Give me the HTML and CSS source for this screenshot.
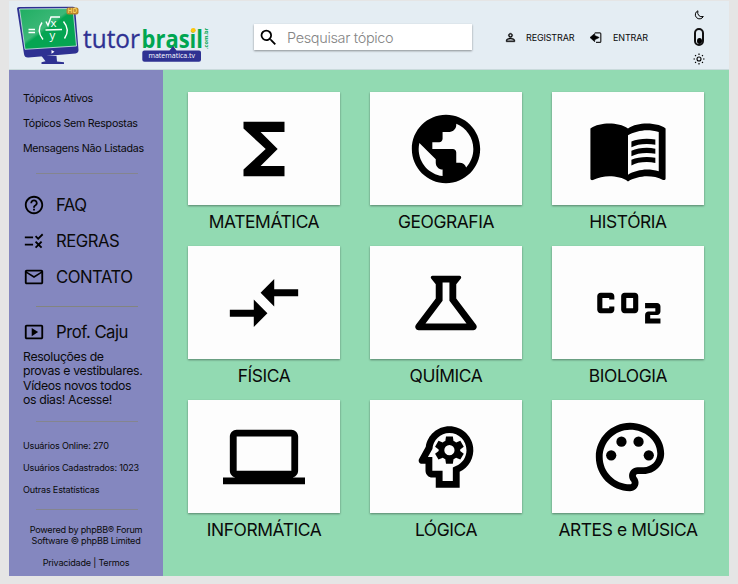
FILE: index.html
```html
<!DOCTYPE html>
<html lang="pt-BR">
<head>
<meta charset="utf-8">
<title>TutorBrasil</title>
<link rel="stylesheet" href="styles.css">
</head>
<body>
<div class="page">
  <header class="header">
    <svg class="logo" viewBox="0 0 200 64" role="img" aria-label="tutorbrasil">
      <defs>
        <linearGradient id="screen" x1="0" y1="0" x2="1" y2="1">
          <stop offset="0" stop-color="#1fae62"/><stop offset=".45" stop-color="#3db878"/><stop offset=".5" stop-color="#05a552"/><stop offset="1" stop-color="#05a552"/>
        </linearGradient>
      </defs>
      <path d="M2 3.500Q2 2 4 2l54-.2q2 0 2.200 2l3.300 41.200q.2 3-3 3.400l-47 4q-4 .3-4.500-3.500z" fill="#2e3192"/>
      <path d="M4.500 4 58 3.500 61.500 41 10 44.300z" fill="url(#screen)" stroke="#d3e9e7" stroke-width=".8"/>
      <path d="M28 51h15l.5 5.500 7 .8v1.700H28v-1.700l4-1z" fill="#2e3192" transform="translate(-1.500 0)"/>
      <path d="m36.500 45 3 1.800-3 1.900z" fill="#fff"/>
      <g class="formula">
        <path d="M13.500 24.500h6.500M13.500 27.500h6.500M27 17.500q-6 8.500 1 17M48.500 16.500q7 8.500 1 17M30.500 25 47 24.500M31 16.500l2 4 3-8.500h9"/>
      </g>
      <text x="35.500" y="21.500" class="variable">x</text>
      <text x="34.500" y="33.500" class="variable">y</text>
      <rect x="51.500" y="2.500" width="12" height="7" rx="2" fill="#b98528"/>
      <text x="52.500" y="8.300" class="hd">HD</text>
      <text x="68" y="42.700" class="tutor" textLength="57" lengthAdjust="spacingAndGlyphs">tutor</text>
      <text x="126.500" y="42.700" class="brasil" textLength="61.500" lengthAdjust="spacingAndGlyphs">brasil</text>
      <circle cx="178.300" cy="25.300" r="2.400" fill="#fdc60b"/>
      <path d="M129.500 45.500h25l3.500-4.500 3.500 4.500h22.500q2 0 2 2v7.300q0 2-2 2h-54.500q-2.200 0-2.200-2v-7.300q0-2 2.200-2z" fill="#2e3192"/>
      <text x="133.500" y="53.300" class="domain" textLength="46.500" lengthAdjust="spacingAndGlyphs">matematica.tv</text>
      <text transform="translate(192.700 44) rotate(-90)" class="suffix" textLength="21" lengthAdjust="spacingAndGlyphs">.com.br</text>
    </svg>

    <label class="search">
      <svg class="search-icon" viewBox="0 0 24 24"><path d="M15.500 14h-.79l-.28-.27A6.470 6.470 0 0 0 16 9.500 6.500 6.500 0 1 0 9.500 16c1.610 0 3.090-.59 4.230-1.570l.27.28v.79l5 4.990L20.490 19l-4.990-5zm-6 0C7.010 14 5 11.990 5 9.500S7.010 5 9.500 5 14 7.010 14 9.500 11.990 14 9.500 14z"/></svg>
      <input class="search-input" type="text" placeholder="Pesquisar tópico">
    </label>

    <nav class="account">
      <a class="account-link register">
        <svg class="account-icon person" viewBox="0 0 24 24"><path d="M12 5.900c1.160 0 2.100.94 2.100 2.100s-.94 2.100-2.100 2.100S9.900 9.160 9.900 8s.94-2.100 2.100-2.100m0 9c2.970 0 6.100 1.460 6.100 2.100v1.100H5.900V17c0-.64 3.130-2.100 6.100-2.100M12 4C9.790 4 8 5.790 8 8s1.790 4 4 4 4-1.790 4-4-1.790-4-4-4zm0 9c-2.670 0-8 1.340-8 4v3h16v-3c0-2.660-5.330-4-8-4z"/></svg>
        <span>REGISTRAR</span>
      </a>
      <a class="account-link login">
        <svg class="account-icon" viewBox="0 0 13 13"><path d="M0 6.500 4.700 2.500v2L9.200 6.500 4.700 8.700v2z" stroke="#000" stroke-width=".6"/><path d="M4.800 1.800h5q1 0 1 1v7.600q0 1-1 1H6" fill="none" stroke="#222" stroke-width="1.200"/></svg>
        <span>ENTRAR</span>
      </a>
    </nav>

    <div class="theme">
      <svg class="theme-icon" viewBox="0 0 12 12"><path d="M4.900 1.800A4.200 4.200 0 1 0 10.300 7.500Q7.500 8.300 5.800 6.500T4.900 1.800z" fill="none" stroke="#000" stroke-linejoin="round"/></svg>
      <span class="toggle"><span class="knob"></span></span>
      <svg class="theme-icon" viewBox="0 0 12 12"><circle cx="6" cy="6" r="2" fill="none" stroke="#000" stroke-width="1.100"/><path d="M6 .5v1.500M6 10v1.500M.5 6h1.500M10 6h1.500M2.100 2.100l.9.900M9 9l.9.900M9.900 2.100 9 3M3 9l-.9.900" stroke="#000" stroke-width="1.200"/></svg>
    </div>
  </header>

  <div class="body">
    <aside class="sidebar">
      <ul class="links">
        <li>Tópicos Ativos</li>
        <li>Tópicos Sem Respostas</li>
        <li>Mensagens Não Listadas</li>
      </ul>
      <hr class="divider">
      <ul class="menu">
        <li><svg viewBox="0 0 24 24"><path d="M11 18h2v-2h-2v2zm1-16C6.480 2 2 6.480 2 12s4.480 10 10 10 10-4.480 10-10S17.520 2 12 2zm0 18c-4.410 0-8-3.590-8-8s3.590-8 8-8 8 3.590 8 8-3.590 8-8 8zm0-14c-2.210 0-4 1.790-4 4h2c0-1.100.9-2 2-2s2 .9 2 2c0 2-3 1.750-3 5h2c0-2.250 3-2.500 3-5 0-2.210-1.790-4-4-4z"/></svg><span>FAQ</span></li>
        <li><svg viewBox="0 0 24 24"><path d="M16.540 11 13 7.460l1.410-1.410 2.120 2.120 4.240-4.240 1.410 1.410L16.540 11zM11 7H2v2h9V7zm10 6.410L19.590 12 17 14.590 14.410 12 13 13.410 15.590 16 13 18.590 14.410 20 17 17.410 19.590 20 21 18.590 18.410 16 21 13.410zM11 15H2v2h9v-2z"/></svg><span>REGRAS</span></li>
        <li><svg viewBox="0 0 24 24"><path d="M22 6c0-1.100-.9-2-2-2H4c-1.100 0-2 .9-2 2v12c0 1.100.9 2 2 2h16c1.100 0 2-.9 2-2V6zm-2 0-8 5-8-5h16zm0 12H4V8l8 5 8-5v10z"/></svg><span>CONTATO</span></li>
      </ul>
      <hr class="divider">
      <ul class="menu">
        <li><svg viewBox="0 0 24 24"><path d="M9.500 7.500v9l7-4.500zM20 4H4c-1.100 0-2 .9-2 2v12c0 1.100.9 2 2 2h16c1.100 0 2-.9 2-2V6c0-1.100-.9-2-2-2zm0 14H4V6h16z"/></svg><span>Prof. Caju</span></li>
      </ul>
      <p class="about">Resoluções de<br>provas e vestibulares.<br>Vídeos novos todos<br>os dias! Acesse!</p>
      <hr class="divider">
      <ul class="stats">
        <li>Usuários Online: 270</li>
        <li>Usuários Cadastrados: 1023</li>
        <li>Outras Estatísticas</li>
      </ul>
      <hr class="divider">
      <footer class="footer">
        <p>Powered by phpBB® Forum<br>Software © phpBB Limited</p>
        <p>Privacidade | Termos</p>
      </footer>
    </aside>

    <main class="grid">
      <figure class="subject">
        <div class="card"><svg viewBox="0 0 24 24"><path d="M18 4H6v2l6.500 6L6 18v2h12v-3h-7l5-5-5-5h7z"/></svg></div>
        <figcaption>MATEMÁTICA</figcaption>
      </figure>
      <figure class="subject">
        <div class="card"><svg viewBox="0 0 24 24"><path d="M12 2C6.480 2 2 6.480 2 12s4.480 10 10 10 10-4.480 10-10S17.520 2 12 2zm-1 17.930c-3.950-.49-7-3.850-7-7.930 0-.62.08-1.210.21-1.790L9 15v1c0 1.100.9 2 2 2v1.930zm6.900-2.540c-.26-.81-1-1.390-1.900-1.390h-1v-3c0-.55-.45-1-1-1H8v-2h2c.55 0 1-.45 1-1V7h2c1.100 0 2-.9 2-2v-.41c2.930 1.190 5 4.060 5 7.410 0 2.080-.8 3.970-2.100 5.390z"/></svg></div>
        <figcaption>GEOGRAFIA</figcaption>
      </figure>
      <figure class="subject">
        <div class="card"><svg viewBox="0 0 24 24"><path d="M21 5c-1.110-.35-2.330-.5-3.500-.5-1.950 0-4.050.4-5.500 1.500-1.450-1.100-3.550-1.500-5.500-1.500S2.450 4.900 1 6v14.650c0 .25.25.5.5.5.1 0 .15-.05.25-.05C3.100 20.450 5.050 20 6.500 20c1.950 0 4.050.4 5.500 1.500 1.350-.85 3.800-1.500 5.500-1.500 1.650 0 3.350.3 4.750 1.050.1.050.15.05.25.05.25 0 .5-.25.5-.5V6c-.6-.45-1.250-.75-2-1zm0 13.500c-1.100-.35-2.300-.5-3.500-.5-1.700 0-4.150.65-5.500 1.500V8c1.350-.85 3.800-1.500 5.500-1.500 1.200 0 2.400.15 3.500.5v11.500z"/><path d="M17.500 10.500c.88 0 1.730.09 2.500.26V9.240C19.210 9.090 18.360 9 17.500 9c-1.700 0-3.240.29-4.500.83v1.660c1.130-.64 2.700-.99 4.500-.99zM13 12.490v1.660c1.130-.64 2.700-.99 4.500-.99.88 0 1.730.09 2.500.26V11.900c-.79-.15-1.640-.24-2.500-.24-1.700 0-3.240.3-4.500.83zM17.500 14.330c-1.700 0-3.240.29-4.500.83v1.660c1.130-.64 2.700-.99 4.500-.99.88 0 1.730.09 2.500.26v-1.520c-.79-.16-1.640-.24-2.500-.24z"/></svg></div>
        <figcaption>HISTÓRIA</figcaption>
      </figure>
      <figure class="subject">
        <div class="card"><svg viewBox="0 0 24 24"><path d="M9.010 14H2v2h7.010v3L13 15l-3.990-4v3zm5.980-1v-3H22V8h-7.010V5L11 9l3.990 4z"/></svg></div>
        <figcaption>FÍSICA</figcaption>
      </figure>
      <figure class="subject">
        <div class="card"><svg viewBox="0 0 24 24"><path fill-rule="evenodd" d="M13 11.330 18 18H6l5-6.670V6h2zM15.960 4H8.040c-.42 0-.65.48-.39.81L9 6.500v4.170L3.200 18.400C2.710 19.060 3.180 20 4 20h16c.82 0 1.290-.94.8-1.600L15 10.670V6.500l1.350-1.690c.26-.33.03-.81-.39-.81z"/></svg></div>
        <figcaption>QUÍMICA</figcaption>
      </figure>
      <figure class="subject">
        <div class="card"><svg viewBox="0 0 24 24"><path d="M14 9h-3c-.55 0-1 .45-1 1v4c0 .55.45 1 1 1h3c.55 0 1-.45 1-1v-4c0-.55-.45-1-1-1zm-.5 4.500h-2v-3h2v3zM8 13v1c0 .55-.45 1-1 1H4c-.55 0-1-.45-1-1v-4c0-.55.45-1 1-1h3c.55 0 1 .45 1 1v1H6.500v-.5h-2v3h2V13H8zm12.500 2.500h-2v1h3V18H17v-2.500c0-.55.45-1 1-1h2v-1h-3V12h3.500c.55 0 1 .45 1 1v1.500c0 .55-.45 1-1 1z"/></svg></div>
        <figcaption>BIOLOGIA</figcaption>
      </figure>
      <figure class="subject">
        <div class="card"><svg viewBox="0 0 24 24"><path d="M20 18c1.100 0 1.990-.9 1.990-2L22 6c0-1.100-.9-2-2-2H4c-1.100 0-2 .9-2 2v10c0 1.100.9 2 2 2H0v2h24v-2h-4zM4 6h16v10H4V6z"/></svg></div>
        <figcaption>INFORMÁTICA</figcaption>
      </figure>
      <figure class="subject">
        <div class="card"><svg viewBox="0 0 24 24"><path fill-rule="evenodd" d="M19.940 9.060C19.500 5.730 16.570 3 13 3 9.470 3 6.570 5.610 6.080 9l-1.930 3.480C3.740 13.140 4.220 14 5 14h1v2c0 1.100.9 2 2 2h1v3h7v-4.680c2.620-1.250 4.350-4.080 3.940-7.260zM14.890 14.630l-.89.42V19h-3v-3H8v-4H6.700l1.330-2.330C8.210 7.060 10.350 5 13 5c2.760 0 5 2.240 5 5 0 2.090-1.290 3.880-3.110 4.630z"/><path fill-rule="evenodd" d="M12 6h2l.2 1.330q.4.150.75.420l1.250-.5 1 1.730-1.050.8v.44l1.050.8-1 1.730-1.250-.5q-.35.270-.75.420L14 14h-2l-.2-1.330q-.4-.15-.75-.42l-1.250.5-1-1.730 1.050-.8v-.44l-1.050-.8 1-1.730 1.250.5q.35-.27.75-.42zm1 2.500a1.500 1.500 0 1 0 0 3 1.500 1.500 0 0 0 0-3z"/></svg></div>
        <figcaption>LÓGICA</figcaption>
      </figure>
      <figure class="subject">
        <div class="card palette"><svg viewBox="0 0 24 24"><path d="M12 22C6.490 22 2 17.510 2 12S6.490 2 12 2s10 4.040 10 9c0 3.310-2.690 6-6 6h-1.770c-.28 0-.5.22-.5.5 0 .12.05.23.13.33.41.47.64 1.060.64 1.670 0 1.380-1.120 2.500-2.500 2.500zm0-18c-4.410 0-8 3.590-8 8s3.590 8 8 8c.28 0 .5-.22.5-.5 0-.16-.08-.28-.14-.35-.41-.46-.63-1.050-.63-1.650 0-1.380 1.120-2.500 2.500-2.500H16c2.210 0 4-1.790 4-4 0-3.860-3.590-7-8-7z"/><circle cx="6.500" cy="11.500" r="1.500"/><circle cx="9.500" cy="7.500" r="1.500"/><circle cx="14.500" cy="7.500" r="1.500"/><circle cx="17.500" cy="11.500" r="1.500"/></svg></div>
        <figcaption>ARTES e MÚSICA</figcaption>
      </figure>
    </main>
  </div>
</div>
</body>
</html>
```
FILE: styles.css
```css
* { box-sizing: border-box; }

body {
  margin: 0;
  background: #e5e5e5;
  color: #0a0a0a;
  font-family: Inter, "Liberation Sans", sans-serif;
}

ul, p, figure { margin: 0; padding: 0; }
ul { list-style: none; }
svg { display: block; flex: none; }

.page {
  width: 720px;
  height: 576px;
  margin-left: 9px;
  padding-top: 1px;
  display: flex;
  flex-direction: column;
}

/* Header */
.header {
  height: 69px;
  flex: none;
  display: flex;
  align-items: flex-start;
  background: #e4edf3;
  border-bottom: 1px solid #c9dadb;
}

.logo { width: 200px; height: 64px; margin: 4px 0 0 6px; }
.formula path { fill: none; stroke: #fff; stroke-width: 1.4; }
.variable { font: 11.5px "Open Sans", sans-serif; fill: #fff; }
.hd { font: bold 6.5px "Open Sans", sans-serif; fill: #f4cf61; }
.tutor { font: 25px "Open Sans", sans-serif; fill: #2e3192; stroke: #2e3192; stroke-width: .3; }
.brasil { font: bold 25px "Open Sans", sans-serif; fill: #00a651; }
.domain { font: 7.5px "Open Sans", sans-serif; fill: #fff; }
.suffix { font: bold 6px "Open Sans", sans-serif; fill: #00a651; }

.search {
  width: 218px;
  height: 26px;
  margin: 23px 0 0 39px;
  padding-left: 4px;
  display: flex;
  align-items: center;
  background: #fff;
  box-shadow: 0 1px 2px rgba(0, 0, 0, .4);
}
.search-icon { width: 21px; height: 21px; }
.search-input {
  width: 180px;
  margin-left: 8px;
  padding: 0;
  border: 0;
  outline: 0;
  background: none;
  font: 300 14.5px Inter, sans-serif;
  letter-spacing: -.35px;
}
.search-input::placeholder { color: #858585; opacity: 1; }

.account { display: flex; height: 26px; margin: 23px 0 0 32px; }
.account-link { display: flex; align-items: center; font-size: 9px; letter-spacing: -.15px; }
.account-link span { padding-top: 1px; }
.account-icon { width: 13px; height: 13px; }
.person { stroke: #0a0a0a; stroke-width: .7; }
.register { width: 86px; gap: 9px; }
.login { width: 62px; gap: 10px; }

.theme {
  width: 12px;
  margin: 8px 0 0 41px;
  display: flex;
  flex-direction: column;
  align-items: center;
  gap: 7px;
}
.theme-icon { width: 12px; height: 12px; }
.toggle {
  width: 10px;
  height: 18px;
  border: 2px solid #111;
  border-radius: 5px;
  display: flex;
  align-items: flex-end;
  justify-content: center;
}
.knob { width: 5px; height: 6px; border-radius: 50%; background: #000; }

/* Sidebar */
.body { flex: 1; display: flex; background: #92dab2; }
.sidebar {
  width: 154px;
  flex: none;
  display: flex;
  flex-direction: column;
  padding: 16px 0 0 14px;
  background: #8487bf;
}
.links { font-size: 10.7px; line-height: 25px; letter-spacing: -.28px; }
.divider {
  width: 102px;
  height: 1px;
  flex: none;
  margin: 12px 0 13px 13px;
  border: 0;
  background: #84858f;
}
.menu li {
  height: 36px;
  display: flex;
  align-items: center;
  gap: 11px;
  font-size: 16.7px;
  letter-spacing: -.5px;
}
.menu svg { width: 22px; height: 22px; }
.menu + .divider { margin: 11px 0 7px 13px; background: #83857f; }
.about {
  height: 58px;
  font-size: 12.3px;
  line-height: 14.4px;
  letter-spacing: -.35px;
}
.about + .divider { margin: 13px 0 13px 13px; }
.stats { font-size: 9.1px; line-height: 22px; letter-spacing: -.19px; }
.stats + .divider { margin: 8px 0 14px 13px; }
.footer {
  padding-right: 14px;
  text-align: center;
  font-size: 9.1px;
  line-height: 11px;
  letter-spacing: -.22px;
}
.footer p + p { margin-top: 11px; }

/* Subjects */
.grid {
  display: grid;
  grid-template-columns: repeat(3, 152px);
  grid-auto-rows: 154px;
  column-gap: 30px;
  align-content: start;
  padding: 22px 0 0 25px;
}
.card {
  height: 113px;
  display: flex;
  align-items: center;
  justify-content: center;
  background: #fdfdfd;
  box-shadow: 0 1px 2px rgba(0, 0, 0, .4);
}
.card svg { width: 82px; height: 82px; }
.palette { padding-left: 4px; }
.subject figcaption {
  margin-top: 5px;
  text-align: center;
  white-space: nowrap;
  font-size: 17.4px;
  line-height: 24px;
  letter-spacing: -.4px;
}
```
